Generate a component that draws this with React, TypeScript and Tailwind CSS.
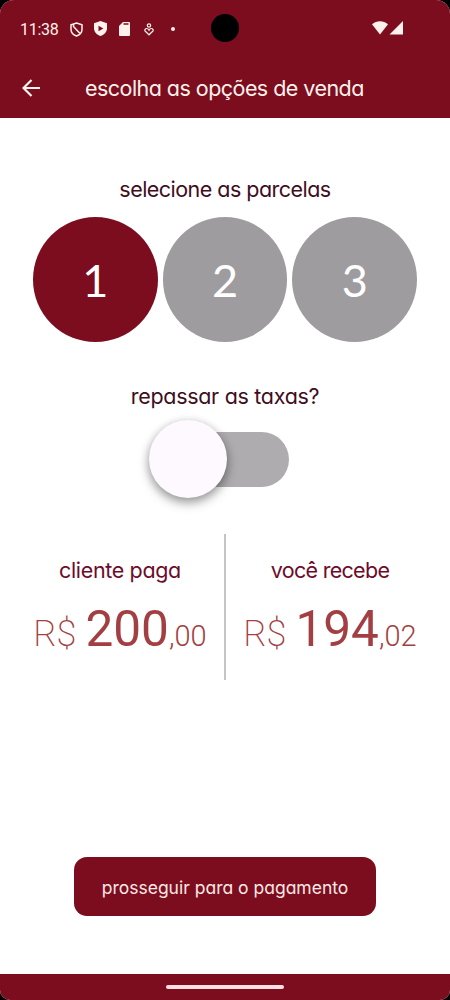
import { useState } from 'react'
import clsx from 'clsx'

const muli = "font-['Inter','Lato',sans-serif] font-[370] [font-feature-settings:'cv11']"

const parcelas = [1, 2, 3]

const valores = [
  {
    label: 'cliente paga',
    inteiro: '200',
    centavos: ',00',
    className: 'border-r pl-4',
    labelClass: 'tracking-[-0.35px]',
  },
  {
    label: 'você recebe',
    inteiro: '194',
    centavos: ',02',
    className: 'border-l pr-4',
    labelClass: 'tracking-[-0.7px]',
  },
]

function StatusBar() {
  return (
    <div className="relative flex h-[58px] items-center pl-5 pr-[47px] text-[#fff1ec]">
      <span className="w-[50px] pt-0.5 font-['Roboto',sans-serif] text-base leading-none tracking-[-0.3px]">11:38</span>

      {/* escudo vazado */}
      <svg className="h-[15px] w-[13px]" viewBox="0 0 13 15" fill="none" stroke="currentColor" strokeWidth="1.5">
        <path d="M6.5 1 12 2.8v4.4c0 3-2.2 5.6-5.5 6.8C3.2 12.8 1 10.2 1 7.2V2.8Z" />
        <path d="M3.5 2v2.4L10 11.6" />
      </svg>

      {/* play protect */}
      <svg className="mb-px ml-[11px] h-[15px] w-[13px]" viewBox="0 0 13 15" fill="currentColor">
        <path fillRule="evenodd" d="M6.5 0 13 2.3v4.9c0 3.7-2.7 6.5-6.5 7.8C2.7 13.7 0 10.9 0 7.2V2.3ZM4.5 4.7v5.6L9.4 7.5Z" />
      </svg>

      {/* cartão sd */}
      <svg className="ml-3 h-[14px] w-[11px]" viewBox="0 0 11 14" fill="currentColor">
        <path fillRule="evenodd" d="M4 0h6a1 1 0 0 1 1 1v12a1 1 0 0 1-1 1H1a1 1 0 0 1-1-1V4ZM4.5 1.2v1.5H9.5v-1.5Z" />
      </svg>

      <svg className="ml-[14px] h-[13px] w-[10px]" viewBox="0 0 10 13" fill="none" stroke="currentColor" strokeWidth="1.2">
        <circle cx="5" cy="2.5" r="1.7" />
        <path d="M5 11.8 1.3 8.3C.2 7 1.2 5.5 2.6 5.5 3.8 5.5 4.5 6.3 5 7.2 5.5 6.3 6.2 5.5 7.4 5.5 8.8 5.5 9.8 7 8.7 8.3Z" />
      </svg>

      <span className="ml-[17px] size-1 rounded-full bg-current" />

      {/* câmera frontal */}
      <div className="absolute left-[211px] top-[14px] size-7 rounded-full bg-black" />

      <svg className="ml-auto mb-0.5 h-[14px] w-[31px]" viewBox="0 0 31 14" fill="currentColor">
        <path d="M0 3.3C4.5-.9 11.5-.9 16 3.3L8 13.5Z" />
        <path d="M31 0v13.5H17.5Z" />
      </svg>
    </div>
  )
}

export default function App() {
  const [parcela, setParcela] = useState(1)
  const [repassar, setRepassar] = useState(false)

  return (
    <div className="h-[1000px] w-[450px] bg-black">
      <div className={clsx('flex h-full flex-col overflow-hidden rounded-t-[14px] rounded-b-[10px] bg-white', muli)}>
        <header className="h-[118px] shrink-0 bg-[#7b0d1e]">
          <StatusBar />
          <div className="flex h-[60px] items-center pl-[22px] text-[#fff1ec]">
            <button className="w-[63px]" aria-label="voltar">
              <svg className="h-[18px] w-[18px]" viewBox="0 0 18 18" fill="none" stroke="currentColor" strokeWidth="2.2">
                <path d="M18 9H1.5M9.5 1 1.5 9l8 8" />
              </svg>
            </button>
            <h1 className="whitespace-nowrap text-[21.5px] tracking-[-0.54px]">escolha as opções de venda</h1>
          </div>
        </header>

        <main className="flex flex-1 flex-col items-center">
          <h2 className="mt-[55px] h-8 whitespace-nowrap text-[21.5px] leading-8 tracking-[-0.53px] text-[#3f0d20]">
            selecione as parcelas
          </h2>

          <div className="mt-3 flex gap-[5px]">
            {parcelas.map((n) => (
              <button
                key={n}
                onClick={() => setParcela(n)}
                className={clsx(
                  "flex size-[124.7px] items-center justify-center rounded-full pt-0.5 font-['Lato',sans-serif] text-[45px] text-white",
                  n === parcela ? 'bg-[#7b0d1e]' : 'bg-[#9f9c9f]',
                )}
              >
                {n}
              </button>
            ))}
          </div>

          <h2 className="mt-[38px] h-8 whitespace-nowrap text-[21.5px] leading-8 tracking-[-0.3px] text-[#3f0d20]">
            repassar as taxas?
          </h2>

          <button
            role="switch"
            aria-checked={repassar}
            aria-label="repassar as taxas"
            onClick={() => setRepassar(!repassar)}
            className="mt-5 flex h-[55px] w-[128px] items-center rounded-full bg-[#aeacae]"
          >
            <span
              className={clsx(
                'size-[78px] shrink-0 rounded-full bg-[#fdf9fe] shadow-[0_5px_11px_rgba(0,0,0,0.36),0_1px_8px_rgba(0,0,0,0.12)]',
                repassar ? 'ml-[62px]' : '-ml-3',
              )}
            />
          </button>

          <div className="mt-[47px] flex h-[146px] w-full">
            {valores.map((v) => (
              <div key={v.label} className={clsx('flex w-1/2 flex-col items-center border-[#c5c3c5]', v.className)}>
                <p className={clsx('mt-5 h-8 whitespace-nowrap text-[21.5px] leading-8 text-[#6d0b2b]', v.labelClass)}>
                  {v.label}
                </p>
                <p className="mt-[13px] flex items-baseline whitespace-nowrap font-['Roboto',sans-serif] leading-[60px] text-[#a33f43]">
                  <span className="mr-[9px] text-[36px] font-extralight">R$</span>
                  <span className="text-[49.5px] font-[450]">{v.inteiro}</span>
                  <span className="text-[29px] font-light">{v.centavos}</span>
                </p>
              </div>
            ))}
          </div>

          <button className="mt-auto mb-[58px] h-[59px] w-[302px] whitespace-nowrap rounded-[13px] bg-[#7b0d1e] pt-[3px] text-[17.5px] text-[#ffe8e6]">
            prosseguir para o pagamento
          </button>
        </main>

        <footer className="flex h-[26px] shrink-0 justify-center bg-[#7b0d1e] pt-[11px]">
          <div className="h-1 w-[118px] rounded-full bg-[#fbe0e3]" />
        </footer>
      </div>
    </div>
  )
}
